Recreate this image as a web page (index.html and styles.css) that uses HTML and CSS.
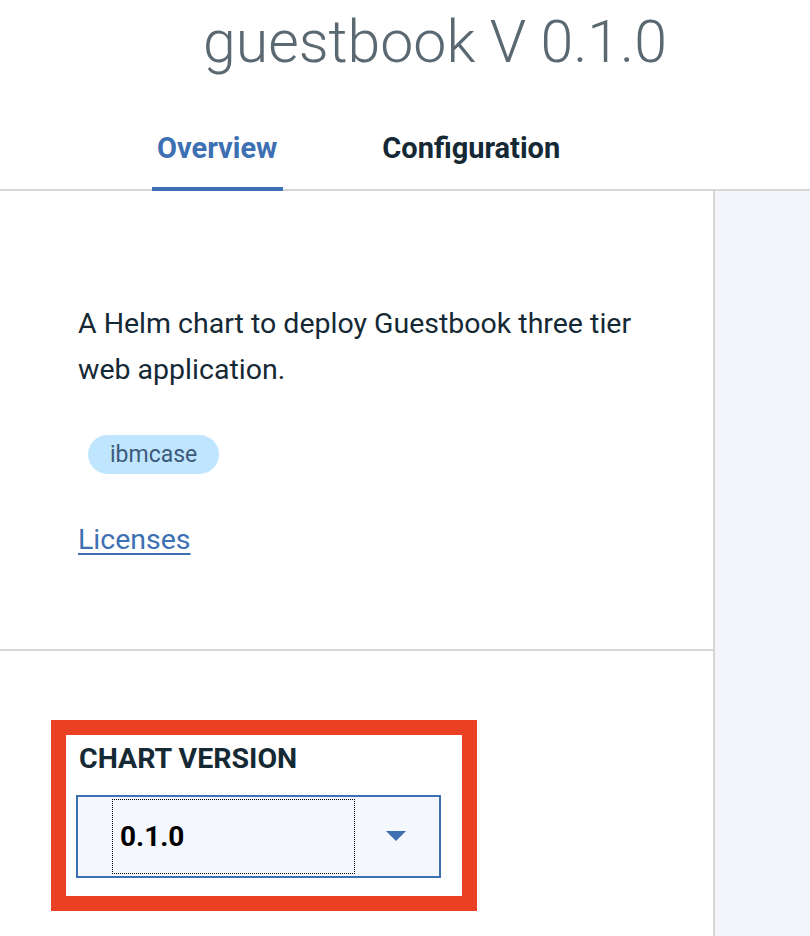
FILE: index.html
```html
<!DOCTYPE html>
<html>
<head>
<meta charset="utf-8">
<link rel="stylesheet" href="styles.css">
</head>
<body>
<div class="page">
  <header class="header">
    <h1 class="title">guestbook V 0.1.0</h1>
    <nav class="tabs">
      <div class="tab active">Overview</div>
      <div class="tab">Configuration</div>
    </nav>
  </header>
  <div class="content">
    <main class="main">
      <section class="overview">
        <p class="desc">A Helm chart to deploy Guestbook three tier web application.</p>
        <div class="tags"><span class="tag">ibmcase</span></div>
        <a class="link" href="#">Licenses</a>
      </section>
      <section class="version">
        <div class="highlight">
          <div class="label">CHART VERSION</div>
          <div class="select">
            <div class="select-value">0.1.0</div>
            <svg class="caret" width="20" height="10" viewBox="0 0 20 10"><path d="M0 0 L20 0 L10 10 Z" fill="#3d70b2"/></svg>
          </div>
        </div>
      </section>
    </main>
    <aside class="side"></aside>
  </div>
</div>
</body>
</html>
```

FILE: styles.css
```css
* { box-sizing: border-box; }
html, body { margin: 0; padding: 0; }
body {
  font-family: Roboto, "Liberation Sans", sans-serif;
  color: #152935;
  background: #fff;
  width: 810px;
  height: 936px;
  overflow: hidden;
}
.page { display: flex; flex-direction: column; height: 936px; }
.header {
  border-bottom: 2px solid #d6d6d6;
  height: 191px;
  display: flex;
  flex-direction: column;
}
.title {
  margin: 0;
  padding: 7px 0 0 203px;
  font-weight: 300;
  font-size: 59px;
  line-height: 70px;
  color: #5a6872;
  white-space: nowrap;
}
.tabs {
  display: flex;
  gap: 94px;
  padding-left: 152px;
  margin-top: auto;
}
.tab {
  font-weight: 700;
  font-size: 29px;
  line-height: 34px;
  padding: 0 5px 22px 5px;
  margin-bottom: -2px;
  border-bottom: 4px solid transparent;
  color: #152935;
  white-space: nowrap;
}
.tab.active {
  color: #3d70b2;
  border-bottom-color: #3d70b2;
  padding-right: 6px;
}
.content { display: flex; flex: 1; }
.main {
  width: 715px;
  border-right: 2px solid #d6d6d6;
  display: flex;
  flex-direction: column;
}
.side { flex: 1; background: #f4f5fa; }
.overview {
  height: 460px;
  border-bottom: 2px solid #d6d6d6;
  padding: 110px 0 0 78px;
}
.desc {
  margin: 0;
  font-size: 28.5px;
  line-height: 46px;
  width: 590px;
}
.tags { margin-top: 42px; padding-left: 10px; }
.tag {
  display: inline-block;
  background: #c0e6ff;
  color: #3d5a7a;
  font-size: 23px;
  line-height: 39px;
  height: 39px;
  padding: 0 22px;
  border-radius: 20px;
}
.link {
  display: inline-block;
  margin-top: 50px;
  font-size: 28.5px;
  line-height: 32px;
  color: #3d70b2;
  text-decoration: underline;
  text-underline-offset: 4px;
}
.version { padding: 69px 0 0 51px; }
.highlight {
  width: 426px;
  border: 15px solid #ea4125;
  padding: 8px 0 0 10px;
  height: 191px;
}
.label {
  font-weight: 700;
  font-size: 28.5px;
  line-height: 32px;
  margin-left: 3px;
  color: #152935;
}
.select {
  margin-top: 20px;
  width: 365px;
  height: 83px;
  border: 2px solid #3d70b2;
  background: #f4f7fb;
  display: flex;
  align-items: center;
  padding: 0 33px 0 34px;
}
.select-value {
  width: 243px;
  height: 75px;
  border: 1px dotted #000;
  font-weight: 700;
  font-size: 28px;
  line-height: 73px;
  padding-left: 7px;
  color: #000;
}
.caret { margin-left: auto; margin-top: -2px; }
```
